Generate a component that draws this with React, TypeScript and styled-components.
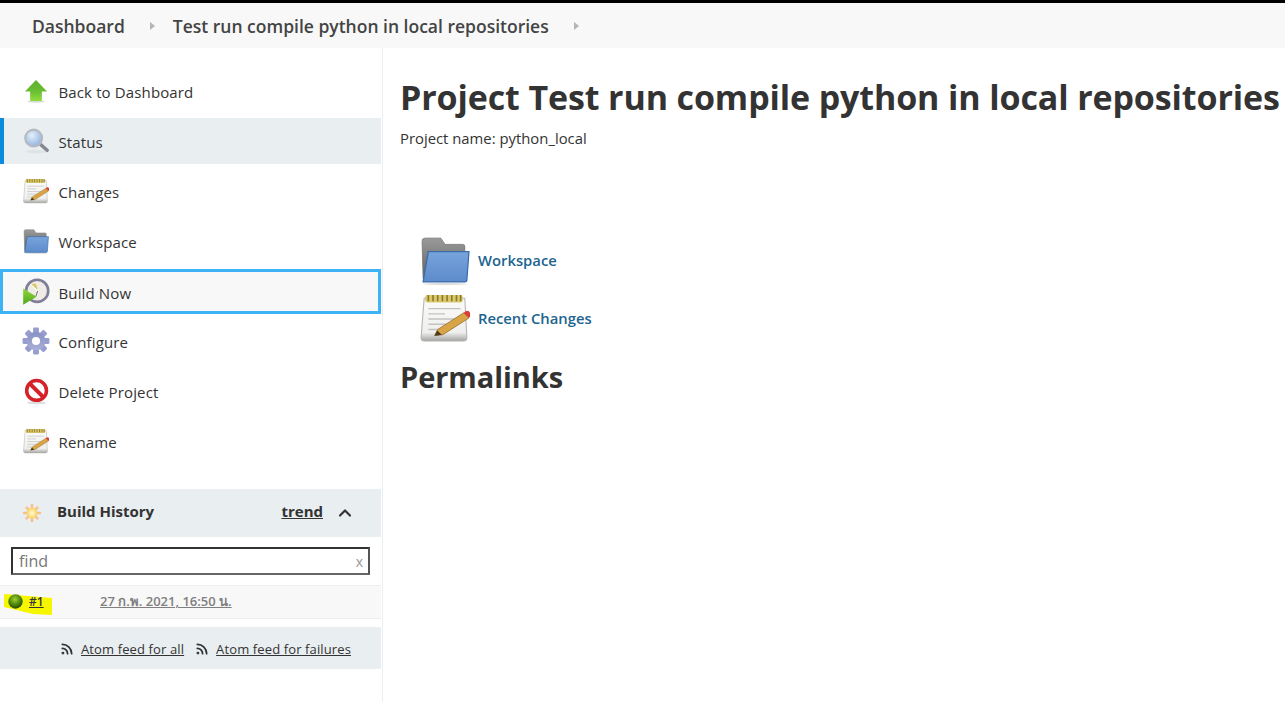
import React from 'react';
import styled, { createGlobalStyle } from 'styled-components';
import { ChevronUp, Rss } from 'lucide-react';

const GlobalStyle = createGlobalStyle`
  html, body {
    margin: 0;
    padding: 0;
    background: #fff;
    font-family: "Open Sans", "Noto Sans", "DejaVu Sans", sans-serif;
    color: #333;
    overflow: hidden;
  }
  * { box-sizing: border-box; }
`;

const Page = styled.div`
  width: 1285px;
  height: 702px;
  display: flex;
  flex-direction: column;
  border-top: 3px solid #000;
`;

const Breadcrumbs = styled.nav`
  height: 45px;
  flex: none;
  background: #f8f8f8;
  display: flex;
  align-items: center;
  padding-left: 32px;
  font-size: 17.5px;
  font-weight: 600;
  color: #444;
`;

const Crumb = styled.span`
  white-space: nowrap;
`;

const CrumbArrow = styled.span`
  width: 0;
  height: 0;
  margin: 0 18px 0 25px;
  border-left: 5px solid #b5b5b5;
  border-top: 4px solid transparent;
  border-bottom: 4px solid transparent;
`;

const Body = styled.div`
  flex: 1;
  display: flex;
  min-height: 0;
`;

const Sidebar = styled.aside`
  width: 383px;
  flex: none;
  padding: 20px 1px 0 0;
  border-right: 1px solid #e9eef1;
`;

const Tasks = styled.ul`
  list-style: none;
  margin: 0 0 25px;
  padding: 0;
  display: flex;
  flex-direction: column;
  gap: 4px;
`;

const Task = styled.li<{ $active?: boolean; $focused?: boolean }>`
  height: ${(p) => (p.$focused ? 45 : 46)}px;
  margin-top: ${(p) => (p.$focused ? 1 : 0)}px;
  display: flex;
  align-items: center;
  gap: 8px;
  padding-left: ${(p) => (p.$focused ? 19 : p.$active ? 18 : 22)}px;
  font-size: 15px;
  letter-spacing: 0.13px;
  color: #333;
  background: ${(p) => (p.$active ? '#e9eef1' : p.$focused ? '#f8f8f8' : 'transparent')};
  border-left: ${(p) => (p.$active ? '4px solid #0b8bdc' : 'none')};
  border: ${(p) => (p.$focused ? '3px solid #3db3f5' : '')};
`;

const TaskLabel = styled.span`
  padding: 2px 0 0 0.5px;
`;

const Icon = styled.svg<{ $size: number; $inset?: number }>`
  width: ${(p) => p.$size}px;
  height: ${(p) => p.$size}px;
  padding: ${(p) => p.$inset ?? 0}px;
  flex: none;
  filter: blur(0.35px);
`;

const PaneHeader = styled.div`
  height: 48px;
  background: #e9eef1;
  display: flex;
  align-items: center;
  padding: 0 26px 0 22px;
  font-size: 15px;
  font-weight: 700;
  color: #333;
`;

const PaneTitle = styled.span`
  margin: 0 0 4px 15px;
  flex: 1;
`;

const Trend = styled.a`
  color: #333;
  text-decoration: underline;
  margin: 0 12px 4px 0;
`;

const SearchWrap = styled.div`
  padding: 10px 11px;
`;

const SearchBox = styled.div`
  height: 28px;
  border: 2px solid #333;
  border-right-color: #555;
  border-bottom-color: #666;
  display: flex;
  align-items: center;
  justify-content: space-between;
  padding: 0 5px 0 6px;
  font-size: 16px;
  color: #777;
`;

const ClearMark = styled.span`
  font-size: 14px;
  color: #999;
`;

const HistoryRow = styled.div`
  position: relative;
  height: 34px;
  background: #f8f8f8;
  border-top: 1px solid #eee;
  border-bottom: 1px solid #eee;
  display: flex;
  padding: 5px 0 0 8px;
  font-size: 13px;
`;

const Highlight = styled.svg`
  position: absolute;
  left: 3px;
  top: 7px;
  width: 49px;
  height: 23px;
`;

const BuildNumber = styled.a`
  position: relative;
  display: flex;
  align-items: center;
  gap: 6px;
  height: 20px;
  width: 92px;
  font-weight: 600;
  font-size: 12px;
  color: #333;
`;

const BuildLink = styled.span`
  text-decoration: underline;
`;

const BuildDate = styled.a`
  position: relative;
  color: #808080;
  font-weight: 600;
  text-decoration: underline;
  line-height: 20px;
`;

const Feeds = styled.div`
  margin-top: 8px;
  height: 42px;
  background: #e9eef1;
  display: flex;
  align-items: center;
  padding: 1px 0 0 60px;
  gap: 11px;
  font-size: 13px;
  letter-spacing: 0.12px;
  color: #333;
`;

const FeedLink = styled.a`
  display: flex;
  align-items: center;
  gap: 7px;
  text-decoration: underline;
  white-space: nowrap;
`;

const Main = styled.main`
  flex: 1;
  padding: 25px 0 0 17px;
  min-width: 0;
`;

const Title = styled.h1`
  margin: 0;
  font-size: 34px;
  letter-spacing: -0.12px;
  line-height: 48px;
  font-weight: 700;
  color: #333;
  white-space: nowrap;
`;

const ProjectName = styled.div`
  margin-top: 7px;
  font-size: 14.85px;
  line-height: 20px;
`;

const MainLinks = styled.div`
  margin: 87px 0 0 20px;
  display: flex;
  flex-direction: column;
  gap: 8px;
`;

const MainLink = styled.a`
  display: flex;
  align-items: center;
  gap: 8px;
  height: 50px;
  font-size: 14.8px;
  font-weight: 600;
  color: #20648f;
`;

const SubTitle = styled.h2`
  margin: 14px 0 0;
  font-size: 29px;
  letter-spacing: -0.05px;
  line-height: 40px;
  font-weight: 700;
  color: #333;
`;

const NotepadIcon = ({ size, id, inset }: { size: number; id: string; inset?: number }) => (
  <Icon $size={size} $inset={inset} viewBox="0 0 48 48">
    <defs>
      <linearGradient id={id} x1="0" y1="0" x2="0" y2="1">
        <stop offset="0" stopColor="#fbfbfa" />
        <stop offset="0.8" stopColor="#efefed" />
        <stop offset="1" stopColor="#a5a5a3" />
      </linearGradient>
    </defs>
    <path d="M4 5 H43 L45 43 Q45 46 42 46 H4 Q1 46 1 43 Z" fill={`url(#${id})`} stroke="#b4b4b2" />
    <rect x="5" y="2" width="36" height="7" rx="2" fill="#d9c86c" />
    <path d="M8 2v6M12.500 2v6M17 2v6M21.500 2v6M26 2v6M30.500 2v6M35 2v6M39 2v6" stroke="#8a7826" strokeWidth="1.5" />
    <path d="M8 15H39M8 20H24M8 25H39M8 30H26M8 35H22" stroke="#c2c2c2" strokeWidth="1.3" />
    <path d="M17 35 L42 19 L47 24 L22 40 L14 41 Z" fill="#d9a445" stroke="#8f6a2b" strokeWidth="0.7" />
    <path d="M14 41 L16.500 36 L21 40 Z" fill="#4a3a20" />
    <path d="M42 19 Q46 15 48 19 Q49 22 47 24 Z" fill="#dc3c34" />
  </Icon>
);

const FolderIcon = ({ size, id, inset }: { size: number; id: string; inset?: number }) => (
  <Icon $size={size} $inset={inset} viewBox="0 0 48 48">
    <defs>
      <linearGradient id={id} x1="0" y1="0" x2="0" y2="1">
        <stop offset="0" stopColor="#78a4dc" />
        <stop offset="1" stopColor="#5d8bcb" />
      </linearGradient>
      <linearGradient id={`${id}-back`} x1="0" y1="0" x2="0" y2="1">
        <stop offset="0" stopColor="#9a9a9a" />
        <stop offset="1" stopColor="#5e5e5e" />
      </linearGradient>
    </defs>
    <path d="M2 6 Q2 3 5 3 H20 L24 9 H41 Q43 9 43 11 V42 H3 Z" fill={`url(#${id}-back)`} stroke="#777" strokeWidth="0.8" />
    <path d="M8 16 H47 L45 43 Q45 45 43 45 H3 Z" fill={`url(#${id})`} stroke="#3a6cab" strokeWidth="1.2" />
    <ellipse cx="24" cy="47" rx="21" ry="1" fill="#ddd" />
  </Icon>
);

const BackIcon = () => (
  <Icon $size={28} viewBox="0 0 48 48">
    <defs>
      <linearGradient id="back-fill" x1="0" y1="0" x2="0" y2="1">
        <stop offset="0" stopColor="#5cae2a" />
        <stop offset="0.55" stopColor="#6abf33" />
        <stop offset="1" stopColor="#8fdc3f" />
      </linearGradient>
    </defs>
    <ellipse cx="24" cy="42" rx="15" ry="2" fill="#d8d8d8" />
    <path d="M24 5 L43 25 H34 V41 H14 V25 H5 Z" fill="url(#back-fill)" />
  </Icon>
);

const SearchIcon = () => (
  <Icon $size={28} viewBox="0 0 48 48">
    <defs>
      <radialGradient id="glass-fill" cx="0.4" cy="0.35" r="0.7">
        <stop offset="0" stopColor="#e6eff9" />
        <stop offset="1" stopColor="#8cb1e0" />
      </radialGradient>
    </defs>
    <ellipse cx="24" cy="42" rx="18" ry="3" fill="#dfe3e5" />
    <path d="M31 29 L43 40" stroke="#85898f" strokeWidth="6" strokeLinecap="round" />
    <circle cx="20" cy="19" r="14.500" fill="url(#glass-fill)" stroke="#b6bac0" strokeWidth="3.500" />
  </Icon>
);

const BuildIcon = () => (
  <Icon $size={28} viewBox="0 0 48 48">
    <defs>
      <linearGradient id="play-fill" x1="0" y1="0" x2="0" y2="1">
        <stop offset="0" stopColor="#8fd63a" />
        <stop offset="1" stopColor="#4fa81c" />
      </linearGradient>
    </defs>
    <circle cx="26" cy="22" r="19" fill="#eeece4" stroke="#7f7d98" strokeWidth="4.500" />
    <path d="M16 10 L27 22 L25 31" fill="none" stroke="#fff" strokeWidth="4" />
    <path d="M15 10 L24 10 L27 21 Z" fill="#dcc868" />
    <path d="M27 22 L24 31" stroke="#77746a" strokeWidth="2" />
    <path d="M2 18 L25 32 L2 46 Z" fill="url(#play-fill)" />
  </Icon>
);

const GearIcon = () => (
  <Icon $size={28} viewBox="0 0 48 48">
    <defs>
      <linearGradient id="gear-fill" x1="0" y1="0" x2="0" y2="1" gradientUnits="objectBoundingBox">
        <stop offset="0" stopColor="#8890c4" />
        <stop offset="1" stopColor="#aab0d6" />
      </linearGradient>
    </defs>
    <g fill="#979ecd">
      <rect x="19" y="1" width="10" height="46" rx="2" />
      <rect x="19" y="1" width="10" height="46" rx="2" transform="rotate(45 24 24)" />
      <rect x="19" y="1" width="10" height="46" rx="2" transform="rotate(90 24 24)" />
      <rect x="19" y="1" width="10" height="46" rx="2" transform="rotate(135 24 24)" />
    </g>
    <circle cx="24" cy="24" r="16" fill="url(#gear-fill)" />
    <circle cx="24" cy="24" r="7" fill="#fff" />
  </Icon>
);

const DeleteIcon = () => (
  <Icon $size={28} viewBox="0 0 48 48">
    <ellipse cx="25" cy="44" rx="17" ry="2.500" fill="#ddd" />
    <circle cx="25" cy="23" r="17" fill="#fff" stroke="#d42228" strokeWidth="6" />
    <path d="M13 11 L37 35" stroke="#d42228" strokeWidth="7" />
  </Icon>
);

const SunIcon = () => (
  <Icon $size={20} viewBox="0 0 48 48">
    <defs>
      <radialGradient id="sun-fill">
        <stop offset="0" stopColor="#fffbd9" />
        <stop offset="1" stopColor="#f8d25e" />
      </radialGradient>
    </defs>
    <g stroke="#f7c08a" strokeWidth="6" strokeLinecap="round">
      <path d="M24 5V43M5 24H43M11 11L37 37M37 11L11 37" />
    </g>
    <circle cx="24" cy="24" r="13" fill="url(#sun-fill)" />
  </Icon>
);

const BallIcon = () => (
  <Icon $size={15} viewBox="0 0 48 48">
    <defs>
      <radialGradient id="ball-fill" cx="0.45" cy="0.35" r="0.7">
        <stop offset="0" stopColor="#9fd030" />
        <stop offset="0.5" stopColor="#548c0c" />
        <stop offset="1" stopColor="#1e3c04" />
      </radialGradient>
    </defs>
    <circle cx="24" cy="24" r="23" fill="url(#ball-fill)" />
  </Icon>
);

const tasks = [
  { label: 'Back to Dashboard', icon: <BackIcon /> },
  { label: 'Status', icon: <SearchIcon />, active: true },
  { label: 'Changes', icon: <NotepadIcon size={28} inset={1} id="notes-changes" /> },
  { label: 'Workspace', icon: <FolderIcon size={28} inset={1} id="folder-side" /> },
  { label: 'Build Now', icon: <BuildIcon />, focused: true },
  { label: 'Configure', icon: <GearIcon /> },
  { label: 'Delete Project', icon: <DeleteIcon /> },
  { label: 'Rename', icon: <NotepadIcon size={28} inset={1} id="notes-rename" /> },
];

export default function App() {
  return (
    <Page>
      <GlobalStyle />
      <Breadcrumbs>
        <Crumb>Dashboard</Crumb>
        <CrumbArrow />
        <Crumb>Test run compile python in local repositories</Crumb>
        <CrumbArrow />
      </Breadcrumbs>
      <Body>
        <Sidebar>
          <Tasks>
            {tasks.map((t) => (
              <Task key={t.label} $active={t.active} $focused={t.focused}>
                {t.icon}
                <TaskLabel>{t.label}</TaskLabel>
              </Task>
            ))}
          </Tasks>
          <PaneHeader>
            <SunIcon />
            <PaneTitle>Build History</PaneTitle>
            <Trend>trend</Trend>
            <ChevronUp size={20} strokeWidth={2.6} color="#333" />
          </PaneHeader>
          <SearchWrap>
            <SearchBox>
              find
              <ClearMark>x</ClearMark>
            </SearchBox>
          </SearchWrap>
          <HistoryRow>
            <Highlight viewBox="0 0 49 23">
              <path d="M1 1 L49 5 V22 L30 21 L1 14 Z" fill="#f6f600" />
            </Highlight>
            <BuildNumber>
              <BallIcon />
              <BuildLink>#1</BuildLink>
            </BuildNumber>
            <BuildDate>27 ก.พ. 2021, 16:50 น.</BuildDate>
          </HistoryRow>
          <Feeds>
            <FeedLink>
              <Rss size={14} strokeWidth={3} />
              Atom feed for all
            </FeedLink>
            <FeedLink>
              <Rss size={14} strokeWidth={3} />
              Atom feed for failures
            </FeedLink>
          </Feeds>
        </Sidebar>
        <Main>
          <Title>Project Test run compile python in local repositories</Title>
          <ProjectName>Project name: python_local</ProjectName>
          <MainLinks>
            <MainLink>
              <FolderIcon size={50} id="folder-main" />
              Workspace
            </MainLink>
            <MainLink>
              <NotepadIcon size={50} id="notes-main" />
              Recent Changes
            </MainLink>
          </MainLinks>
          <SubTitle>Permalinks</SubTitle>
        </Main>
      </Body>
    </Page>
  );
}
